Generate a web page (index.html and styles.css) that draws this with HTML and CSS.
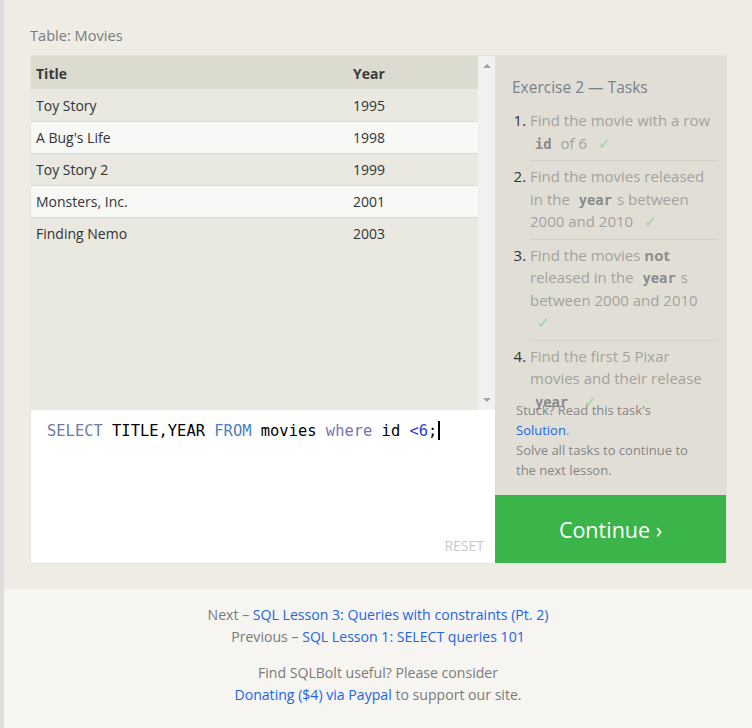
FILE: index.html
```html
<!DOCTYPE html>
<html>
<head>
<meta charset="utf-8">
<link rel="stylesheet" href="styles.css">
</head>
<body>
<div class="page">
  <main class="main">
    <div class="table-label">Table: Movies</div>
    <div class="exercise">
      <div class="left-col">
        <div class="table-view">
          <div class="table-wrap">
            <table class="movies">
              <thead>
                <tr><th class="c-title">Title</th><th class="c-year">Year</th></tr>
              </thead>
              <tbody>
                <tr class="odd"><td>Toy Story</td><td>1995</td></tr>
                <tr class="even"><td>A Bug's Life</td><td>1998</td></tr>
                <tr class="odd"><td>Toy Story 2</td><td>1999</td></tr>
                <tr class="even"><td>Monsters, Inc.</td><td>2001</td></tr>
                <tr class="odd"><td>Finding Nemo</td><td>2003</td></tr>
              </tbody>
            </table>
          </div>
          <div class="scrollbar">
            <span class="arrow up"></span>
            <span class="arrow down"></span>
          </div>
        </div>
        <div class="editor">
          <div class="code"><span class="kw">SELECT</span> TITLE,YEAR <span class="kw2">FROM</span> movies <span class="kw3">where</span> id <span class="op">&lt;6</span>;<span class="cursor"></span></div>
          <div class="reset">RESET</div>
        </div>
      </div>
      <div class="right-col">
        <div class="tasks">
          <div class="tasks-title">Exercise 2 — Tasks</div>
          <ol class="task-list">
            <li>Find the movie with a row <code>id</code> of 6 <span class="check">✓</span></li>
            <li>Find the movies released in the <code>year</code>s between 2000 and 2010 <span class="check">✓</span></li>
            <li>Find the movies <b>not</b> released in the <code>year</code>s between 2000 and 2010 <span class="check">✓</span></li>
            <li>Find the first 5 Pixar movies and their release <code>year</code> <span class="check">✓</span></li>
          </ol>
          <div class="stuck">
            Stuck? Read this task's<br>
            <a class="link" href="#">Solution</a>.<br>
            Solve all tasks to continue to the next lesson.
          </div>
        </div>
        <div class="continue">Continue ›</div>
      </div>
    </div>
  </main>
  <footer class="footer">
    <div class="nav-line">Next – <a class="link" href="#">SQL Lesson 3: Queries with constraints (Pt. 2)</a></div>
    <div class="nav-line">Previous – <a class="link" href="#">SQL Lesson 1: SELECT queries 101</a></div>
    <div class="donate">
      <div>Find SQLBolt useful? Please consider</div>
      <div><a class="link" href="#">Donating ($4) via Paypal</a> to support our site.</div>
    </div>
  </footer>
</div>
</body>
</html>
```

FILE: styles.css
```css
* { box-sizing: border-box; }
html, body { margin: 0; padding: 0; }
body {
  font-family: "Open Sans", "Noto Sans", sans-serif;
  background: #efece6;
  width: 752px;
  height: 728px;
  overflow: hidden;
}
.page {
  border-left: 4px solid #e0dedc;
  min-height: 728px;
  display: flex;
  flex-direction: column;
}
.main {
  background: #efece6;
  padding: 25px 25px 25px 26px;
  height: 589px;
}
.table-label {
  font-size: 14.6px;
  color: #7b7b7b;
  line-height: 20px;
  margin-bottom: 10px;
  height: 20px;
}
.exercise {
  display: flex;
  border: 1px solid #e6e4dd;
  height: 509px;
}
.left-col {
  width: 464px;
  display: flex;
  flex-direction: column;
}
.table-view {
  height: 354px;
  display: flex;
  background: #e9e8e1;
}
.table-wrap { flex: 1; }
.movies {
  width: 100%;
  border-collapse: collapse;
  font-size: 14px;
  color: #333;
}
.movies th {
  background: #dcdbd0;
  text-align: left;
  font-weight: 700;
  height: 33px;
  padding: 1px 5px 0;
  color: #3a3a3a;
}
.movies .c-title { width: 317px; }
.movies td {
  height: 32px;
  padding: 1px 5px 0;
  border-bottom: 1px solid #dddcd6;
}
.movies tr.odd td { background: #e9e8e1; }
.movies tr.even td { background: #f8f8f7; }
.movies tbody tr:last-child td { border-bottom: none; }
.scrollbar {
  width: 17px;
  background: #f1f1f1;
  display: flex;
  flex-direction: column;
  justify-content: space-between;
  align-items: center;
  padding: 8px 0;
}
.arrow {
  width: 0; height: 0;
  border-left: 4px solid transparent;
  border-right: 4px solid transparent;
}
.arrow.up { border-bottom: 4px solid #a3a3a3; }
.arrow.down { border-top: 4px solid #a3a3a3; }
.editor {
  flex: 1;
  background: #fff;
  display: flex;
  flex-direction: column;
  justify-content: space-between;
  padding: 10px 11px 8px 16px;
}
.code {
  font-family: "DejaVu Sans Mono", monospace;
  font-size: 15.45px;
  line-height: 22px;
  color: #000;
  white-space: pre;
}
.code .kw { color: #6c7aa8; }
.code .kw2 { color: #4a7fc0; }
.code .kw3 { color: #7a72b0; }
.code .op { color: #2a3fd0; }
.cursor {
  display: inline-block;
  width: 2px;
  height: 19px;
  background: #000;
  margin-left: 1px;
  vertical-align: -4px;
}
.reset {
  align-self: flex-end;
  font-size: 14px;
  color: #c8c8c8;
  line-height: 18px;
}
.right-col {
  width: 231px;
  display: flex;
  flex-direction: column;
}
.tasks {
  position: relative;
  flex: 1;
  background: #e1dfd5;
  padding: 20px 7px 0 17px;
  overflow: hidden;
}
.tasks-title {
  font-size: 15.5px;
  color: #7b8090;
  line-height: 22px;
  margin-bottom: 11px;
}
.task-list {
  margin: 0;
  padding-left: 18px;
  font-size: 15px;
  line-height: 22.5px;
  color: #a3a29d;
}
.task-list li {
  padding: 0 0 6px;
  margin-bottom: 4px;
  border-bottom: 1px solid #d3d1c8;
}
.task-list li:last-child { border-bottom: none; }
.task-list li::marker { color: #333; }
.task-list code {
  font-family: "DejaVu Sans Mono", monospace;
  font-weight: 700;
  font-size: 13.8px;
  line-height: 0;
  color: #8a8a8a;
  padding: 0 5px;
}
.task-list b { color: #8f8f8c; }
.check {
  color: #9ad3a4;
  margin-left: 7px;
}
.stuck {
  position: absolute;
  left: 21px;
  right: 28px;
  bottom: 15px;
  font-size: 13px;
  line-height: 20px;
  color: #858585;
}
.link { color: #2266e0; text-decoration: none; }
.continue {
  height: 68px;
  background: #3bb54a;
  color: #fff;
  font-size: 21.5px;
  display: flex;
  align-items: center;
  justify-content: center;
}
.footer {
  background: #f6f5f1;
  flex: 1;
  text-align: center;
  font-size: 14.1px;
  color: #7a7a7a;
  line-height: 22px;
  padding-top: 15px;
}
.donate { margin-top: 14px; }
```
